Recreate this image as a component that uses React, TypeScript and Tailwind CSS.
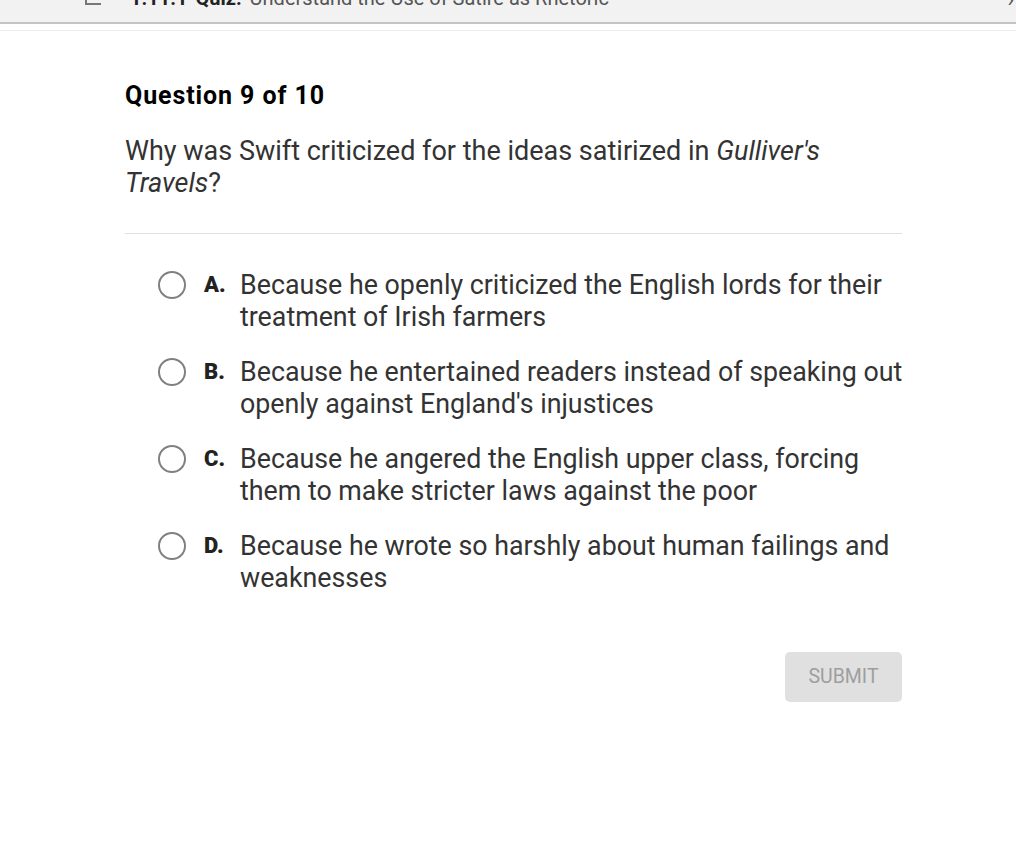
import React from "react";

const options = [
  { letter: "A.", lines: ["Because he openly criticized the English lords for their", "treatment of Irish farmers"] },
  { letter: "B.", lines: ["Because he entertained readers instead of speaking out", "openly against England's injustices"] },
  { letter: "C.", lines: ["Because he angered the English upper class, forcing", "them to make stricter laws against the poor"] },
  { letter: "D.", lines: ["Because he wrote so harshly about human failings and", "weaknesses"] },
];

export default function App() {
  return (
    <div className="w-[1016px] h-[855px] bg-white overflow-hidden" style={{ fontFamily: "Roboto, 'Liberation Sans', sans-serif" }}>
      <div className="h-[24px] bg-[#f2f2f2] border-b-2 border-[#c4c4c4] overflow-hidden flex items-start">
        <div className="flex items-start mt-[-17px] w-full">
          <div className="ml-[85px] mt-[13px] w-[16px] h-[9px] border-l-2 border-b-2 border-[#777] shrink-0"></div>
          <span className="ml-[29px] text-[20px] font-bold text-[#222] whitespace-nowrap">1.11.1</span>
          <span className="ml-[8px] text-[20px] font-bold text-[#222] whitespace-nowrap">Quiz:</span>
          <span className="ml-[8px] text-[20px] text-[#555] whitespace-nowrap">Understand the Use of Satire as Rhetoric</span>
          <span className="ml-auto mr-[2px] text-[22px] text-[#555]">›</span>
        </div>
      </div>
      <div className="h-[6px]"></div>
      <div className="h-px bg-[#ececec]"></div>

      <div className="pl-[125px] w-[902px]">
        <h2 className="mt-[50px] text-[25px] font-bold text-black leading-[30px] tracking-[0.9px]">Question 9 of 10</h2>
        <p className="mt-[24px] text-[27px] leading-[32px] text-[#333]">
          Why was Swift criticized for the ideas satirized in <i>Gulliver's</i>
          <br />
          <i>Travels</i>?
        </p>
        <div className="mt-[34px] h-px bg-[#e0e0e0]"></div>

        <div className="mt-[35px] flex flex-col gap-[23px] pl-[33px]">
          {options.map((o) => (
            <div key={o.letter} className="flex items-start">
              <div className="mt-[2px] w-[28px] h-[28px] rounded-full border-[2.5px] border-[#808080] shrink-0"></div>
              <div className="ml-[18px] w-[36px] shrink-0 text-[22px] font-black text-[#222] leading-[32px]">{o.letter}</div>
              <div className="text-[26.8px] leading-[32px] text-[#333] whitespace-nowrap">
                {o.lines[0]}
                <br />
                {o.lines[1]}
              </div>
            </div>
          ))}
        </div>

        <div className="mt-[58px] flex justify-end">
          <button className="w-[117px] h-[50px] rounded-[5px] bg-[#e0e0e0] text-[#9e9e9e] text-[19.5px]">SUBMIT</button>
        </div>
      </div>
    </div>
  );
}
